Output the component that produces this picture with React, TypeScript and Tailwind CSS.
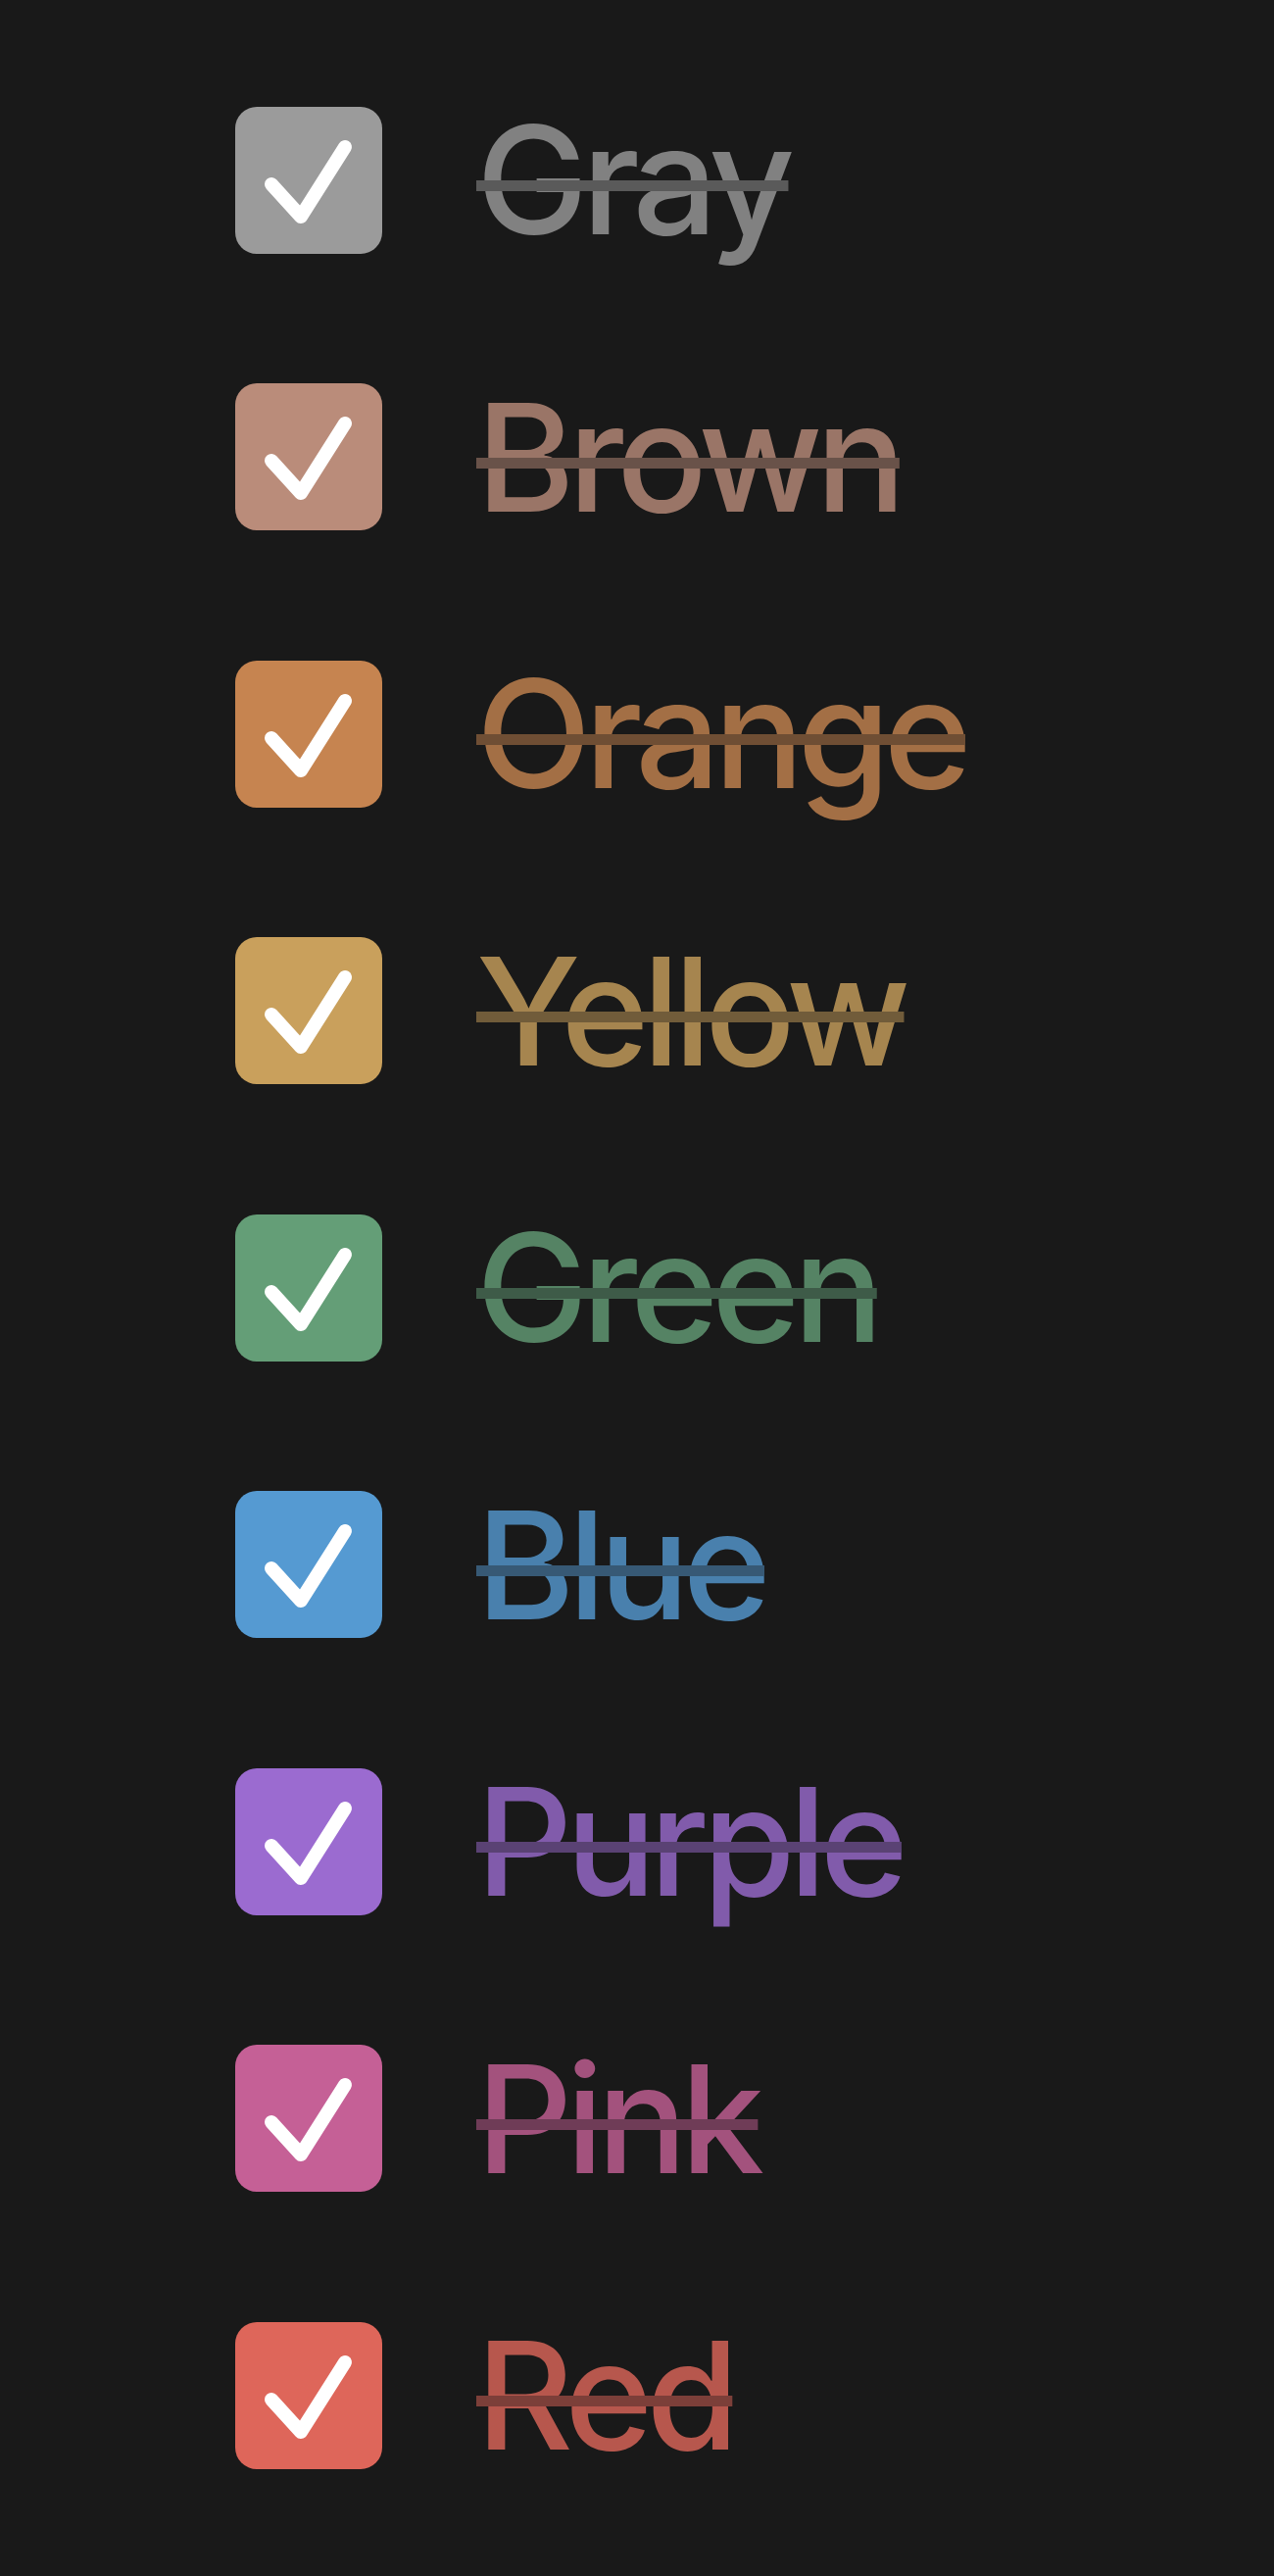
import React from "react";

type Item = {
  label: string;
  box: string;
  text: string;
};

// colours of the done checklist: box / label (faded) / strike line (darker)
const ITEMS: Item[] = [
  { label: "Gray", box: "bg-[#9b9b9b]", text: "text-[#818181] decoration-[#5a5a5a]" },
  { label: "Brown", box: "bg-[#ba8c7a]", text: "text-[#9a7567] decoration-[#695249]" },
  { label: "Orange", box: "bg-[#c68450]", text: "text-[#a36f45] decoration-[#6f4e34]" },
  { label: "Yellow", box: "bg-[#c9a05c]", text: "text-[#a6854f] decoration-[#715c3a]" },
  { label: "Green", box: "bg-[#649e77]", text: "text-[#558364] decoration-[#3e5b48]" },
  { label: "Blue", box: "bg-[#559ad2]", text: "text-[#4980ad] decoration-[#375975]" },
  { label: "Purple", box: "bg-[#9b6bd0]", text: "text-[#815bab] decoration-[#5a4274]" },
  { label: "Pink", box: "bg-[#c56096]", text: "text-[#a3527d] decoration-[#6f3c57]" },
  { label: "Red", box: "bg-[#de665a]", text: "text-[#b7574d] decoration-[#7c3f39]" },
];

const CheckBox: React.FC<{ color: string }> = ({ color }) => (
  <div className={`w-[150px] h-[150px] shrink-0 rounded-[22px] ${color}`}>
    <svg viewBox="0 0 150 150" className="w-full h-full" fill="none">
      <polyline
        points="37,79 67,112 112,41"
        stroke="white"
        strokeWidth="14"
        strokeLinecap="round"
        strokeLinejoin="round"
      />
    </svg>
  </div>
);

const App: React.FC = () => {
  return (
    <div className="min-h-screen bg-[#191919] font-['Inter','Noto_Sans',sans-serif] antialiased">
      <ul className="flex flex-col gap-[131.5px] pl-[240px] pt-[108px] pb-[108px]">
        {ITEMS.map((item) => (
          <li key={item.label} className="flex items-center gap-[96px] h-[151px]">
            <CheckBox color={item.box} />
            <span
              className={`text-[153px] font-medium leading-none tracking-[-0.044em] line-through decoration-[11px] ${item.text}`}
            >
              {item.label}
            </span>
          </li>
        ))}
      </ul>
    </div>
  );
};

export default App;
